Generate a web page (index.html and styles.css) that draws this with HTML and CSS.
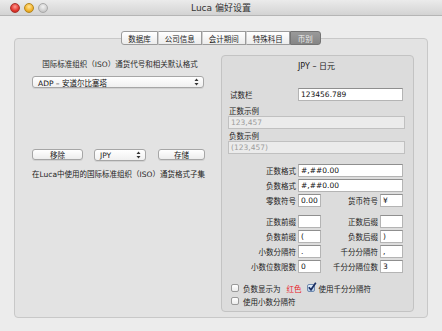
FILE: index.html
```html
<!DOCTYPE html>
<html lang="zh">
<head>
  <meta charset="UTF-8"/>
  <title>Luca 偏好设置</title>
  <link rel="stylesheet" href="styles.css">
</head>
<body>
  <div class="window">
    <div class="titlebar">
      <div class="lights">
        <span class="light red"></span>
        <span class="light yellow"></span>
        <span class="light off"></span>
      </div>
      <div class="title">Luca 偏好设置</div>
      <div></div>
    </div>

    <div class="content">
      <div class="tabs">
        <div class="tab">数据库</div>
        <div class="tab">公司信息</div>
        <div class="tab">会计期间</div>
        <div class="tab">特殊科目</div>
        <div class="tab active">币别</div>
      </div>

      <div class="tabbox">
        <div class="left">
          <div class="iso-label">国际标准组织（ISO）通货代号和相关默认格式</div>
          <div class="popup wide">
            <span>ADP – 安道尔比塞塔</span>
            <svg class="arrows" width="5" height="8" viewBox="0 0 5 8"><path d="M2.5 0.5 L4.5 3 L0.5 3 Z M2.5 7.5 L4.5 5 L0.5 5 Z" fill="#333"/></svg>
          </div>
          <div class="btn-row">
            <div class="btn remove">移除</div>
            <div class="popup small">
              <span>JPY</span>
              <svg class="arrows" width="5" height="8" viewBox="0 0 5 8"><path d="M2.5 0.5 L4.5 3 L0.5 3 Z M2.5 7.5 L4.5 5 L0.5 5 Z" fill="#333"/></svg>
            </div>
            <div class="btn save">存储</div>
          </div>
          <div class="subset">在Luca中使用的国际标准组织（ISO）通货格式子集</div>
        </div>

        <div class="panel">
          <div class="panel-title">JPY – 日元</div>

          <div class="test-row">
            <span class="test-label">试数栏</span>
            <input class="field test" type="text" value="123456.789">
          </div>

          <div class="sample-label first">正数示例</div>
          <input class="field sample" type="text" value="123,457" disabled>
          <div class="sample-label">负数示例</div>
          <input class="field sample" type="text" value="(123,457)" disabled>

          <div class="fmt-grid formats">
            <span class="lbl">正数格式</span>
            <input class="field span" type="text" value="#,##0.00">
            <span class="lbl">负数格式</span>
            <input class="field span" type="text" value="#,##0.00">
            <span class="lbl">零数符号</span>
            <input class="field" type="text" value="0.00">
            <span class="lbl">货币符号</span>
            <input class="field" type="text" value="¥">
          </div>

          <div class="fmt-grid affixes">
            <span class="lbl">正数前缀</span>
            <input class="field" type="text" value="">
            <span class="lbl">正数后缀</span>
            <input class="field" type="text" value="">
            <span class="lbl">负数前缀</span>
            <input class="field" type="text" value="(">
            <span class="lbl">负数后缀</span>
            <input class="field" type="text" value=")">
            <span class="lbl">小数分隔符</span>
            <input class="field" type="text" value=".">
            <span class="lbl">千分分隔符</span>
            <input class="field" type="text" value=",">
            <span class="lbl">小数位数限数</span>
            <input class="field" type="text" value="0">
            <span class="lbl">千分分隔位数</span>
            <input class="field" type="text" value="3">
          </div>

          <div class="checks">
            <div class="check-row">
              <span class="box"></span>
              <span>负数显示为</span>
              <span class="red">红色</span>
              <span class="box checked">
                <svg width="10" height="10" viewBox="0 0 10 10"><path d="M1.8 5.2 L4 7.8 L8.8 0.8" fill="none" stroke="#1b2f63" stroke-width="1.7"/></svg>
              </span>
              <span>使用千分分隔符</span>
            </div>
            <div class="check-row">
              <span class="box"></span>
              <span>使用小数分隔符</span>
            </div>
          </div>
        </div>
      </div>
    </div>
  </div>
</body>
</html>
```

FILE: styles.css
```css
html, body {
  margin: 0; padding: 0;
  width: 442px; height: 331px;
  overflow: hidden;
}
body {
  background: #ececec;
  font-family: "DejaVu Sans", "Noto Sans CJK SC", sans-serif;
  font-size: 7.5px;
  color: #222;
}
.window {
  height: 331px;
  display: flex; flex-direction: column;
}
.titlebar {
  flex: 0 0 auto;
  height: 15px;
  display: grid;
  grid-template-columns: 1fr auto 1fr;
  align-items: center;
  background: linear-gradient(#ebebeb, #d3d3d3);
  border-bottom: 1px solid #b5b5b5;
}
.lights {
  display: flex; gap: 4px;
  padding-left: 4px;
}
.light {
  width: 10px; height: 10px;
  border-radius: 50%;
  box-sizing: border-box;
}
.light.red {
  background: radial-gradient(circle at 50% 35%, #ff9a92, #e0352c 60%, #b4221b);
  border: 1px solid #a8332c;
}
.light.yellow {
  background: radial-gradient(circle at 50% 35%, #ffe59a, #f2b22a 60%, #c98c12);
  border: 1px solid #b3861e;
}
.light.off {
  background: radial-gradient(circle at 50% 35%, #f2f2f2, #cfcfcf 60%, #b5b5b5);
  border: 1px solid #a9a9a9;
}
.title {
  font-size: 9px;
  color: #333;
}
.content {
  flex: 1 1 auto;
  padding: 15px 14px 0 14px;
}
.tabs {
  display: flex; justify-content: center;
  height: 14px;
  margin-bottom: -7px;
  position: relative; z-index: 1;
}
.tab {
  display: flex; align-items: center; justify-content: center;
  height: 14px; box-sizing: border-box;
  padding: 0 6px;
  background: linear-gradient(#ffffff, #ececec);
  border: 1px solid #9b9b9b;
  border-left: 1px solid #d0d0d0;
  color: #1d1d1d;
  font-size: 7.5px;
}
.tab:first-child {
  border-left: 1px solid #9b9b9b;
  border-radius: 3px 0 0 3px;
}
.tab.active {
  background: linear-gradient(#9a9a9a, #858585);
  border-color: #747474;
  color: #ececec;
  border-radius: 0 3px 3px 0;
  padding: 0 7px;
}
.tabbox {
  height: 280px; box-sizing: border-box;
  display: flex;
  padding: 16px 13px 5px 17px;
  background: #e3e3e3;
  border: 1px solid #c8c8c8;
  border-radius: 4px;
}
.left {
  flex: 0 0 176px;
  margin-right: 13px;
}
.iso-label {
  margin-top: 5px;
  line-height: 10px;
  text-align: center;
  color: #2a2a2a;
}
.popup {
  display: flex; align-items: center; justify-content: space-between;
  height: 12px; box-sizing: border-box;
  padding: 0 4px 0 5px;
  background: linear-gradient(#ffffff, #f0f0f0);
  border: 1px solid #a6a6a6;
  border-radius: 3px;
  box-shadow: 0 1px 0 rgba(0,0,0,0.08);
  font-size: 7.5px;
}
.popup.wide {
  width: 172px;
  margin-top: 6px;
  color: #111;
}
.popup.small {
  width: 52px;
  margin-left: 11px;
}
.btn-row {
  display: flex;
  margin-top: 61px;
}
.btn {
  display: flex; align-items: center; justify-content: center;
  height: 11px; box-sizing: border-box;
  background: linear-gradient(#ffffff, #ededed);
  border: 1px solid #a6a6a6;
  border-radius: 3px;
  box-shadow: 0 1px 0 rgba(0,0,0,0.08);
}
.btn.remove { width: 51px; }
.btn.save { width: 47px; margin-left: 12px; }
.subset {
  margin-top: 9px;
  line-height: 10px;
  color: #222;
}
.panel {
  flex: 0 0 193px;
  box-sizing: border-box;
  padding: 0 8px 0 6px;
  background: #dcdcdc;
  border: 1px solid #c3c3c3;
  border-radius: 4px;
}
.panel-title {
  margin-top: 6px;
  line-height: 10px;
  text-align: center;
  font-size: 8px;
  color: #222;
}
.test-row {
  display: flex; align-items: center;
  margin-top: 16px;
}
.test-label {
  width: 68px;
  padding-left: 2px;
}
.field {
  display: block;
  height: 13px; box-sizing: border-box;
  margin: 0; padding: 0 2px;
  background: #fff;
  border: 1px solid #b4b4b4;
  border-top-color: #8f8f8f;
  border-radius: 0;
  font-family: "DejaVu Sans", "Noto Sans CJK SC", sans-serif;
  font-size: 7.5px;
  color: #111;
  outline: none;
}
.field.test { width: 105px; }
.field.sample {
  width: 177px;
  background: #ebebeb;
  border-color: #c0c0c0;
  color: #9c9c9c;
}
.sample-label {
  margin-top: 3px;
  line-height: 9px;
  padding-left: 1px;
}
.sample-label.first { margin-top: 6px; }
.fmt-grid {
  display: grid;
  grid-template-columns: 68px 23px 55px 23px;
  grid-auto-rows: 13px;
  column-gap: 2px; row-gap: 2px;
  align-items: center;
}
.fmt-grid .field { width: 100%; }
.fmt-grid .field.span { grid-column: 2 / 5; }
.formats { margin-top: 10px; }
.affixes { margin-top: 8px; }
.lbl {
  text-align: right;
  white-space: nowrap;
}
.checks { margin-top: 10px; }
.check-row {
  display: flex; align-items: center;
  height: 10px;
  margin-bottom: 3px;
  padding-left: 3px;
}
.box {
  width: 8px; height: 8px; box-sizing: border-box;
  margin-right: 4px;
  background: linear-gradient(#ffffff, #ececec);
  border: 1px solid #9a9a9a;
  border-radius: 2px;
  position: relative;
}
.box.checked {
  margin-left: 5px;
  background: linear-gradient(#e4effb, #b8cfe9);
  border-color: #6f8bb0;
}
.box.checked svg {
  position: absolute; left: -1px; top: -3px;
}
.red {
  color: #e8242b;
  margin-left: 6px;
}
```
